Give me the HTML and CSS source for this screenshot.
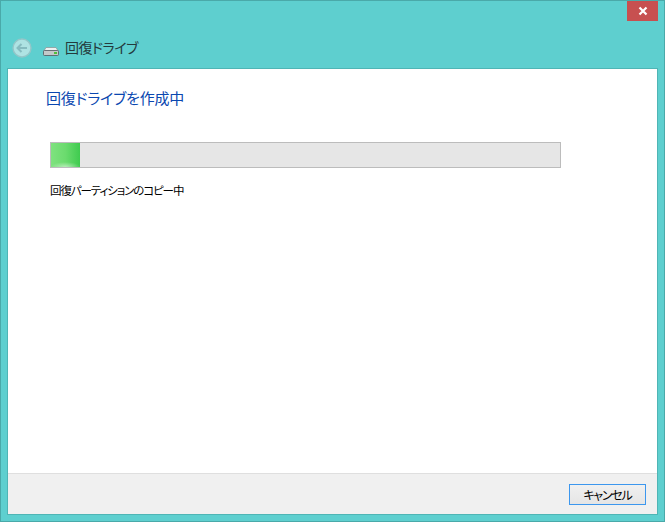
FILE: index.html
```html
<!DOCTYPE html>
<html lang="ja">
<head>
<meta charset="utf-8">
<title>回復ドライブ</title>
<link rel="stylesheet" href="styles.css">
</head>
<body>
<div class="window">
  <div class="close" aria-label="閉じる">
    <svg width="10" height="10" viewBox="0 0 10 10"><path d="M1.5 1.5 8.5 8.5M8.5 1.5 1.5 8.5" stroke="#fff" stroke-width="2.2" fill="none"/></svg>
  </div>
  <header class="titlebar">
    <svg class="back" width="20" height="20" viewBox="0 0 20 20">
      <circle cx="10" cy="10" r="9" fill="#aee3e3" stroke="#93c6c8" stroke-width="1.4"/>
      <path d="M15 10H6M9.5 6 5.5 10l4 4" stroke="#86bcc0" stroke-width="2" fill="none"/>
    </svg>
    <svg class="drive" width="16" height="9" viewBox="0 0 16 9">
      <path d="M3 .5h10l2.5 4H.5z" fill="#eef1f1" stroke="#8d9a9a" stroke-width=".8"/>
      <rect x=".5" y="3.5" width="15" height="5" rx="1" fill="#c3c9c9" stroke="#59636a" stroke-width=".9"/>
      <rect x="11" y="5" width="3" height="2" fill="#4fbf3a"/>
    </svg>
    <span class="title">回復ドライブ</span>
  </header>
  <main class="panel">
    <section class="content">
      <h1 class="heading">回復ドライブを作成中</h1>
      <div class="progress"><div class="progress-fill"></div></div>
      <p class="status">回復パーティションのコピー中</p>
    </section>
    <footer class="footer">
      <button class="button" type="button">キャンセル</button>
    </footer>
  </main>
</div>
</body>
</html>
```
FILE: styles.css
```css
html, body {
  margin: 0;
  padding: 0;
  height: 100%;
  overflow: hidden;
}
body {
  font-family: "Noto Sans CJK JP", "Liberation Sans", sans-serif;
  font-feature-settings: "palt";
}
.window {
  position: relative;
  box-sizing: border-box;
  width: 665px;
  height: 522px;
  display: flex;
  flex-direction: column;
  padding: 0 7px 7px;
  background: #5ecfcf;
  border: 1px solid #4aa9a9;
}
.close {
  position: absolute;
  top: 0;
  right: 6px;
  width: 31px;
  height: 20px;
  background: #c75050;
  display: flex;
  align-items: center;
  justify-content: center;
}
.titlebar {
  height: 68px;
  flex: none;
  box-sizing: border-box;
  padding: 37px 0 0 4px;
  display: flex;
  align-items: flex-start;
}
.back { flex: none; }
.drive { flex: none; margin: 9px 0 0 11px; }
.title {
  margin: -1px 0 0 6px;
  font-size: 14px;
  line-height: 20px;
  letter-spacing: -.5px;
  color: #243a3c;
}
.panel {
  flex: 1;
  display: flex;
  flex-direction: column;
  background: #fff;
  outline: 1px solid #4fb5b5;
}
.content {
  flex: 1;
  padding: 18px 0 0 38px;
}
.heading {
  margin: 0;
  font-size: 15px;
  font-weight: 400;
  line-height: 22px;
  letter-spacing: -.2px;
  color: #0a47b0;
}
.progress {
  box-sizing: border-box;
  width: 511px;
  height: 26px;
  margin: 33px 0 0 4px;
  background: #e6e6e6;
  border: 1px solid #bcbcbc;
}
.progress-fill {
  width: 29px;
  height: 24px;
  background:
    radial-gradient(ellipse 15px 5px at 50% 100%, rgba(255,255,255,.5), rgba(255,255,255,0)),
    linear-gradient(90deg, #7fe27f, #6bdb6e 50%, #3fcb4f);
}
.status {
  margin: 13px 0 0 4px;
  font-size: 11.5px;
  line-height: 18px;
  letter-spacing: -1.1px;
  color: #000;
}
.footer {
  flex: none;
  height: 41px;
  box-sizing: border-box;
  padding: 10px 11px 0 0;
  display: flex;
  justify-content: flex-end;
  align-items: flex-start;
  background: #f0f0f0;
  border-top: 1px solid #dfdfdf;
}
.button {
  box-sizing: border-box;
  width: 77px;
  height: 21px;
  padding: 0;
  font-family: inherit;
  font-feature-settings: "palt";
  font-size: 12px;
  line-height: 17px;
  letter-spacing: -1.2px;
  color: #000;
  background: linear-gradient(#f0f0f0, #e5e5e5);
  border: 1px solid #3c97ee;
  border-radius: 0;
}
```
